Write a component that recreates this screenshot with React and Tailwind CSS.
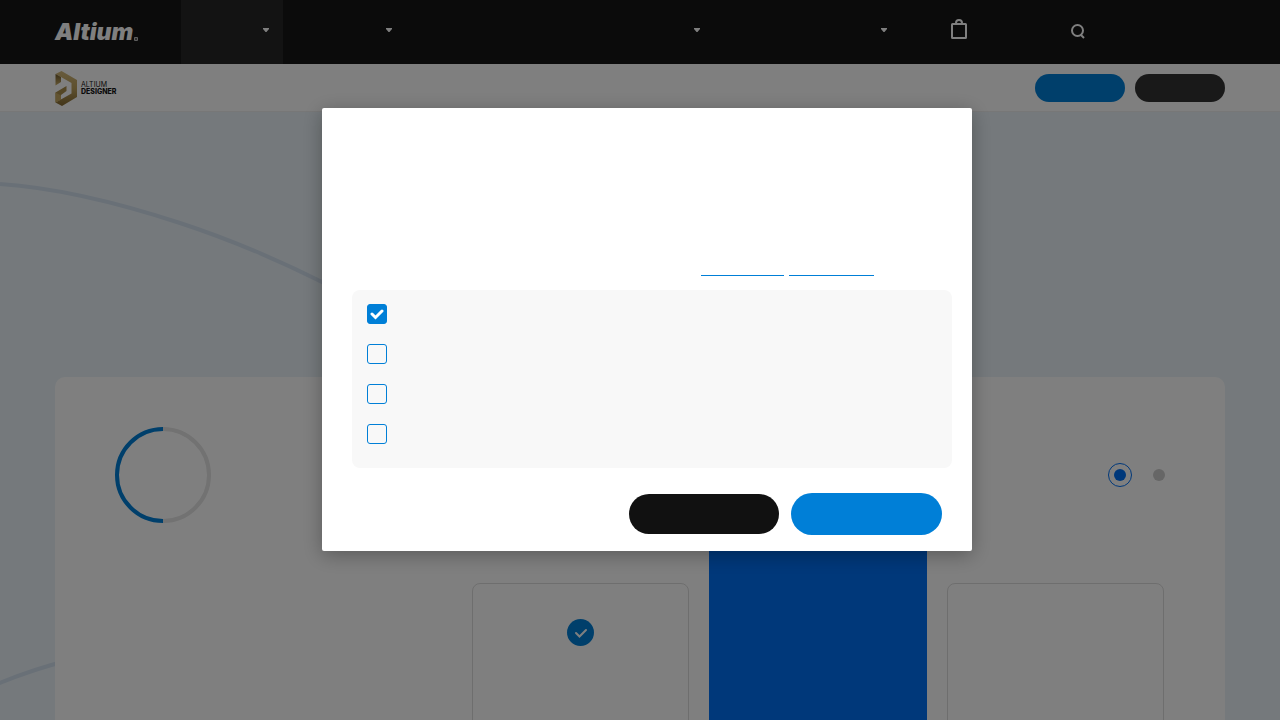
import React, { useState } from 'react';

const NAV_ITEMS = [
    { label: 'Products', className: 'w-[102px] bg-[#262626]' },
    { label: 'Solutions', className: 'w-[123px]' },
    { label: 'Resources', className: 'w-[308px]' },
    { label: 'Company', className: 'w-[187px]' },
];

const COOKIE_OPTIONS = ['Necessary', 'Performance', 'Functional', 'Marketing'];

const CheckMark = ({ className, strokeWidth }) => (
    <svg className={className} viewBox="0 0 14 12" fill="none" stroke="currentColor" strokeWidth={strokeWidth} strokeLinecap="round" aria-hidden="true">
        <path d="M2 6 L5.5 9.5 L12 3" />
    </svg>
);

const DesignerLogo = () => (
    <a href="#designer" className="flex items-center gap-1 font-['Inter'] text-[7px] leading-[7px] text-[#161616]">
        <svg className="h-9 w-[22px]" viewBox="0 -1 22 36" aria-hidden="true">
            <defs>
                <linearGradient id="gold" x1="0" y1="0" x2="0" y2="1">
                    <stop offset="0" stopColor="#cfb67a" />
                    <stop offset="0.5" stopColor="#bda15d" />
                    <stop offset="1" stopColor="#856a32" />
                </linearGradient>
                <linearGradient id="goldDark" x1="0" y1="0" x2="0" y2="1">
                    <stop offset="0" stopColor="#6f5829" />
                    <stop offset="1" stopColor="#c9ad69" />
                </linearGradient>
            </defs>
            <path d="M0.5 3 L6.5 0 L22 9 V26 L7 35 L0.5 31.5 L16.5 22.5 V12 L6 6 Z" fill="url(#gold)" />
            <path d="M0.5 3 L6 6 V11 L0.5 14.5 Z" fill="url(#goldDark)" />
            <path d="M11.5 15 V20 L6 24 V28.5 L0.5 31.5 V21.5 Z" fill="#a98c4b" />
            <path d="M0.5 21.5 L6 24.5 V28.5 L0.5 31.5 Z" fill="#c4a761" />
        </svg>
        <span className="flex flex-col">
            <span>ALTIUM</span>
            <span className="font-extrabold">DESIGNER</span>
        </span>
    </a>
);

const Header = () => (
    <header className="bg-[#161616]">
        <div className="mx-auto flex h-16 max-w-[1170px] items-center">
            <a href="#home" className="flex w-[126px] items-end gap-px text-white">
                <span className="font-['Inter'] text-[23px] leading-6 font-black italic">Altium</span>
                <span className="mb-[3px] size-1 rounded-[1px] border border-white/60 bg-white/30"></span>
            </a>
            <nav className="flex h-full">
                {NAV_ITEMS.map((item) => (
                    <button key={item.label} aria-label={item.label} className={`flex h-full items-center justify-end pr-[14px] pb-1 ${item.className}`}>
                        <svg className="h-1 w-[6px]" viewBox="0 0 6 4" fill="#fff"><path d="M0 0 H6 V1 L3.5 4 H2.5 L0 1 Z" /></svg>
                    </button>
                ))}
            </nav>
            <button aria-label="Cart" className="ml-[50px] pb-[6px]">
                <svg className="h-5 w-4" viewBox="0 0 16 20" fill="none" stroke="#fff" strokeWidth="2">
                    <rect x="1" y="5" width="14" height="14" rx="0.5" />
                    <path d="M5 4.5 V4 A3 3 0 0 1 11 4 V4.5" />
                </svg>
            </button>
            <button aria-label="Search" className="ml-[104px]">
                <svg className="size-4" viewBox="0 0 16 16" fill="none" stroke="#fff" strokeWidth="2">
                    <circle cx="6.5" cy="6.5" r="5.5" />
                    <path d="M9.5 10.5 L13 14" />
                </svg>
            </button>
        </div>
    </header>
);

const ProductBar = () => (
    <div className="h-12 border-b border-[#eeeeee] bg-white">
        <div className="mx-auto flex h-full max-w-[1170px] items-center justify-between pt-px">
            <DesignerLogo />
            <div className="flex gap-[10px]">
                <button aria-label="Free trial" className="h-7 w-[90px] rounded-full bg-[#007fd7]"></button>
                <button aria-label="Buy now" className="h-7 w-[90px] rounded-full bg-[#333333]"></button>
            </div>
        </div>
    </div>
);

const Pricing = () => {
    const [term, setTerm] = useState('annual');

    return (
        <section className="mx-auto min-h-[600px] max-w-[1170px] rounded-t-[10px] bg-white px-[60px] pt-[50px]">
            <div className="flex items-center justify-between">
                <svg className="size-24" viewBox="0 0 96 96" fill="none" strokeWidth="4">
                    <path d="M48 2 A46 46 0 0 1 48 94" stroke="#e4e4e4" />
                    <path d="M48 2 A46 46 0 0 0 48 94" stroke="#007fd7" />
                </svg>
                <div className="flex items-center gap-[21px]">
                    {['annual', 'perpetual'].map((value) => (
                        <input
                            key={value}
                            type="radio"
                            name="term"
                            aria-label={value}
                            checked={term === value}
                            onChange={() => setTerm(value)}
                            className="grid size-3 appearance-none place-items-center rounded-full bg-[#cccccc] checked:size-6 checked:border checked:border-[#0070f5] checked:bg-transparent checked:before:size-3 checked:before:rounded-full checked:before:bg-[#0070f5]"
                        />
                    ))}
                </div>
            </div>

            {/* Plan columns */}
            <div className="mt-5 mr-px ml-[357px] grid grid-cols-3 gap-5">
                <div className="mt-10 flex h-80 justify-center rounded-lg border border-[#dddddd] pt-[35px]">
                    <span className="flex size-[27px] items-center justify-center rounded-full bg-[#007fd7] text-white">
                        <CheckMark className="h-3 w-[14px]" strokeWidth="2" />
                    </span>
                </div>
                <div className="h-90 rounded-lg bg-[#0070f5]"></div>
                <div className="mt-10 h-80 rounded-lg border border-[#dddddd]"></div>
            </div>
        </section>
    );
};

const CookieDialog = () => {
    const [selected, setSelected] = useState(['Necessary']);

    const toggle = (name) => {
        setSelected(selected.includes(name) ? selected.filter((item) => item !== name) : [...selected, name]);
    };

    return (
        <div className="fixed inset-0 flex items-start justify-center bg-black/50 pt-[108px] pl-[14px]">
            <div role="dialog" aria-label="Cookies" className="w-full max-w-[650px] rounded-xs bg-white pt-[140px] pr-5 pb-4 pl-[30px] shadow-[0_4px_20px_rgba(0,0,0,0.3)]">
                <div className="flex h-7 justify-end gap-[5px] pr-[78px]">
                    <a href="#privacy" aria-label="Privacy policy" className="w-[83px] border-b border-[#007fd7]"></a>
                    <a href="#cookies" aria-label="Cookie policy" className="w-[85px] border-b border-[#007fd7]"></a>
                </div>
                <div className="mt-[14px] flex flex-col gap-5 rounded-lg bg-[#f8f8f8] px-[15px] pt-[14px] pb-6">
                    {COOKIE_OPTIONS.map((name) => (
                        <label key={name} className="relative flex size-5">
                            <input
                                type="checkbox"
                                aria-label={name}
                                checked={selected.includes(name)}
                                onChange={() => toggle(name)}
                                className="size-5 appearance-none rounded-[3px] border border-[#007fd7] checked:bg-[#007fd7]"
                            />
                            {selected.includes(name) && (
                                <CheckMark className="pointer-events-none absolute top-1 left-[3px] h-3 w-[14px] text-white" strokeWidth="3" />
                            )}
                        </label>
                    ))}
                </div>
                <div className="mt-[25px] flex items-center justify-end gap-3 pr-[10px]">
                    <button aria-label="Save settings" className="h-10 w-[150px] rounded-full bg-[#111111]"></button>
                    <button aria-label="Accept all" className="h-[42px] w-[151px] rounded-full bg-[#007fd7]"></button>
                </div>
            </div>
        </div>
    );
};

const App = () => (
    <div className="h-screen overflow-hidden bg-[#eaf3f9]">
        <Header />
        <ProductBar />
        <main className="relative pt-[265px]">
            {/* Background waves */}
            <svg className="absolute top-0 left-0 h-[608px] w-[640px]" viewBox="0 0 640 608" fill="none" stroke="#d3e0ee" strokeWidth="4">
                <path d="M0 72 C60 76 125 93 180 111 S280 149 322 170 S480 250 600 300" />
                <path d="M-5 573 Q30 558 70 548" />
            </svg>
            <div className="relative">
                <Pricing />
            </div>
        </main>
        <CookieDialog />
    </div>
);

export default App;
